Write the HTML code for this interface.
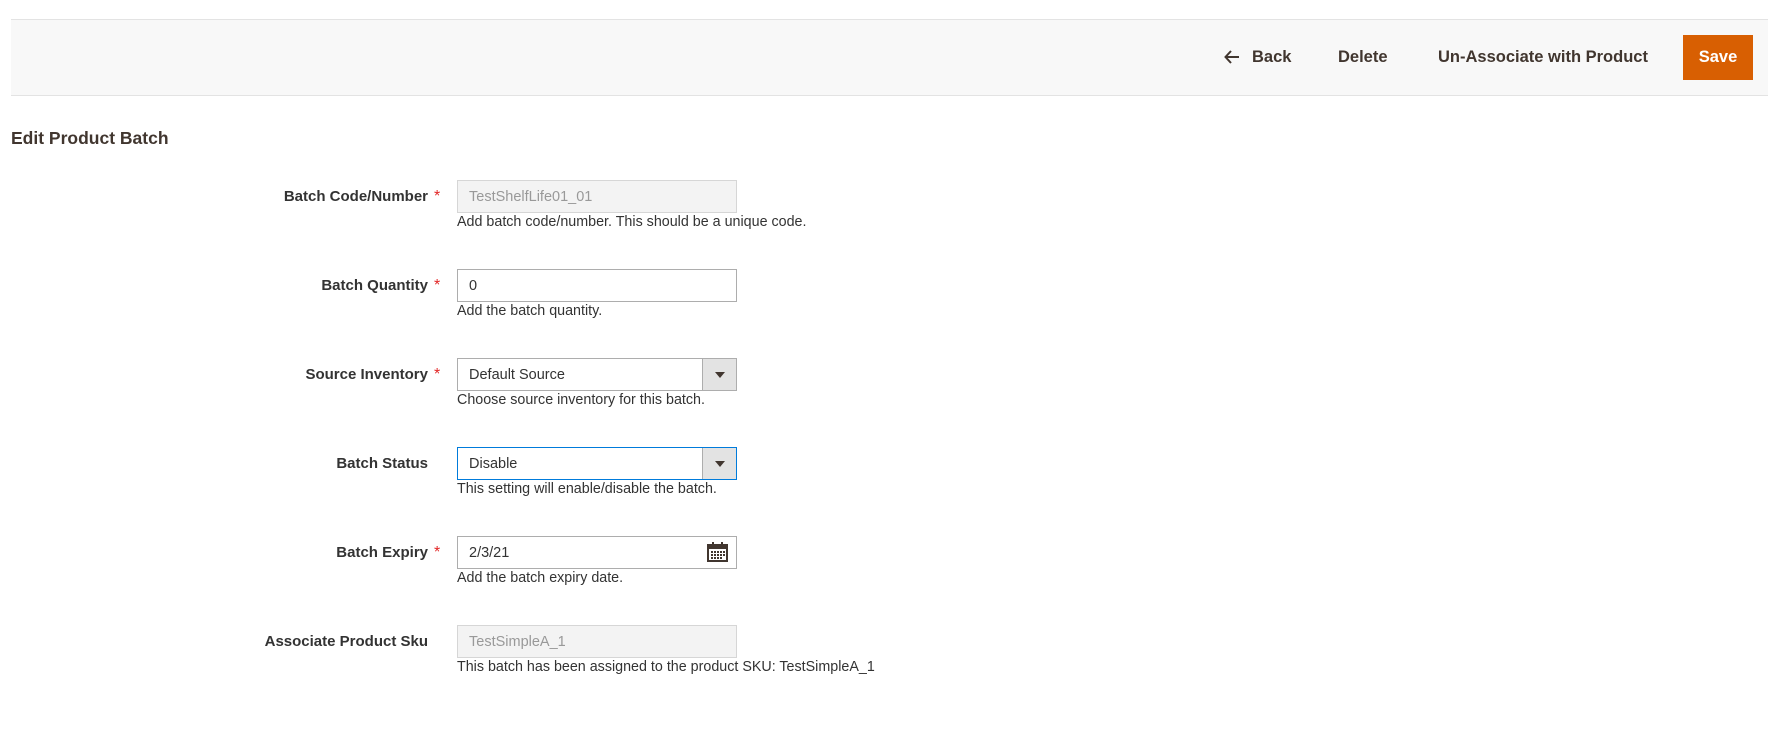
<!DOCTYPE html>
<html><head><meta charset="utf-8"><style>
*{box-sizing:border-box;margin:0;padding:0}
body{width:1790px;height:733px;background:#fff;font-family:"Liberation Sans",sans-serif;color:#333;position:relative;overflow:hidden}
.bar{position:absolute;left:11px;top:19px;width:1757px;height:77px;background:#f8f8f8;border-top:1px solid #e3e3e3;border-bottom:1px solid #e3e3e3}
.act{position:absolute;top:45px;font-size:16.5px;font-weight:bold;color:#41362f;line-height:24px}
.save{position:absolute;left:1683px;top:35px;width:70px;height:45px;background:#d85f02;color:#fff;font-weight:bold;font-size:16.5px;line-height:45px;text-align:center}
h1{position:absolute;left:11px;top:128px;font-size:17.5px;font-weight:bold;color:#41362f}
.lbl{position:absolute;right:1362px;font-size:15px;font-weight:bold;color:#333;text-align:right;white-space:nowrap}
.ast{position:absolute;left:434px;color:#e22626;font-size:16px}
.inp{position:absolute;left:457px;width:280px;height:33px;border:1px solid #adadad;background:#fff;font-size:14.5px;line-height:32px;padding-left:11px;color:#333}
.dis{background:#f3f3f3;border-color:#d6d6d6;color:#999}
.sel .arr{position:absolute;right:0;top:0;width:34px;height:31px;background:#e3e3e3;border-left:1px solid #adadad}
.sel .arr:after{content:"";position:absolute;left:12px;top:13px;border-left:5px solid transparent;border-right:5px solid transparent;border-top:6px solid #41362f}
.note{position:absolute;left:457px;font-size:14.3px;color:#333;white-space:nowrap}
</style></head><body>
<div class="bar"></div>
<svg style="position:absolute;left:1224px;top:50px" width="16" height="14" viewBox="0 0 16 14"><path d="M15 7H2M7 1L1.5 7L7 13" fill="none" stroke="#41362f" stroke-width="2"/></svg>
<div class="act" style="left:1252px">Back</div>
<div class="act" style="left:1338px">Delete</div>
<div class="act" style="left:1438px">Un-Associate with Product</div>
<div class="save">Save</div>
<h1>Edit Product Batch</h1>

<div class="lbl" style="top:188px">Batch Code/Number</div><div class="ast" style="top:188px">*</div>
<div class="inp dis" style="top:180px">TestShelfLife01_01</div>
<div class="note" style="top:214px">Add batch code/number. This should be a unique code.</div>

<div class="lbl" style="top:277px">Batch Quantity</div><div class="ast" style="top:277px">*</div>
<div class="inp" style="top:269px">0</div>
<div class="note" style="top:303px">Add the batch quantity.</div>

<div class="lbl" style="top:366px">Source Inventory</div><div class="ast" style="top:366px">*</div>
<div class="inp sel" style="top:358px">Default Source<div class="arr"></div></div>
<div class="note" style="top:392px">Choose source inventory for this batch.</div>

<div class="lbl" style="top:455px">Batch Status</div>
<div class="inp sel" style="top:447px;border-color:#007bdb">Disable<div class="arr"></div></div>
<div class="note" style="top:481px">This setting will enable/disable the batch.</div>

<div class="lbl" style="top:544px">Batch Expiry</div><div class="ast" style="top:544px">*</div>
<div class="inp" style="top:536px">2/3/21
<svg style="position:absolute;right:8px;top:5px" width="21" height="20" viewBox="0 0 21 20"><rect x="1" y="3" width="19" height="16" fill="#fff" stroke="#41362f" stroke-width="2"/><rect x="1" y="3" width="19" height="4" fill="#41362f"/><rect x="5" y="0" width="2" height="5" fill="#41362f"/><rect x="14" y="0" width="2" height="5" fill="#41362f"/><g fill="#41362f"><rect x="4" y="9" width="2" height="2"/><rect x="7" y="9" width="2" height="2"/><rect x="10" y="9" width="2" height="2"/><rect x="13" y="9" width="2" height="2"/><rect x="16" y="9" width="2" height="2"/><rect x="4" y="12" width="2" height="2"/><rect x="7" y="12" width="2" height="2"/><rect x="10" y="12" width="2" height="2"/><rect x="13" y="12" width="2" height="2"/><rect x="16" y="12" width="2" height="2"/><rect x="4" y="15" width="2" height="2"/><rect x="7" y="15" width="2" height="2"/><rect x="10" y="15" width="2" height="2"/><rect x="13" y="15" width="2" height="2"/></g></svg></div>
<div class="note" style="top:570px">Add the batch expiry date.</div>

<div class="lbl" style="top:633px">Associate Product Sku</div>
<div class="inp dis" style="top:625px">TestSimpleA_1</div>
<div class="note" style="top:659px">This batch has been assigned to the product SKU: TestSimpleA_1</div>
</body></html>
